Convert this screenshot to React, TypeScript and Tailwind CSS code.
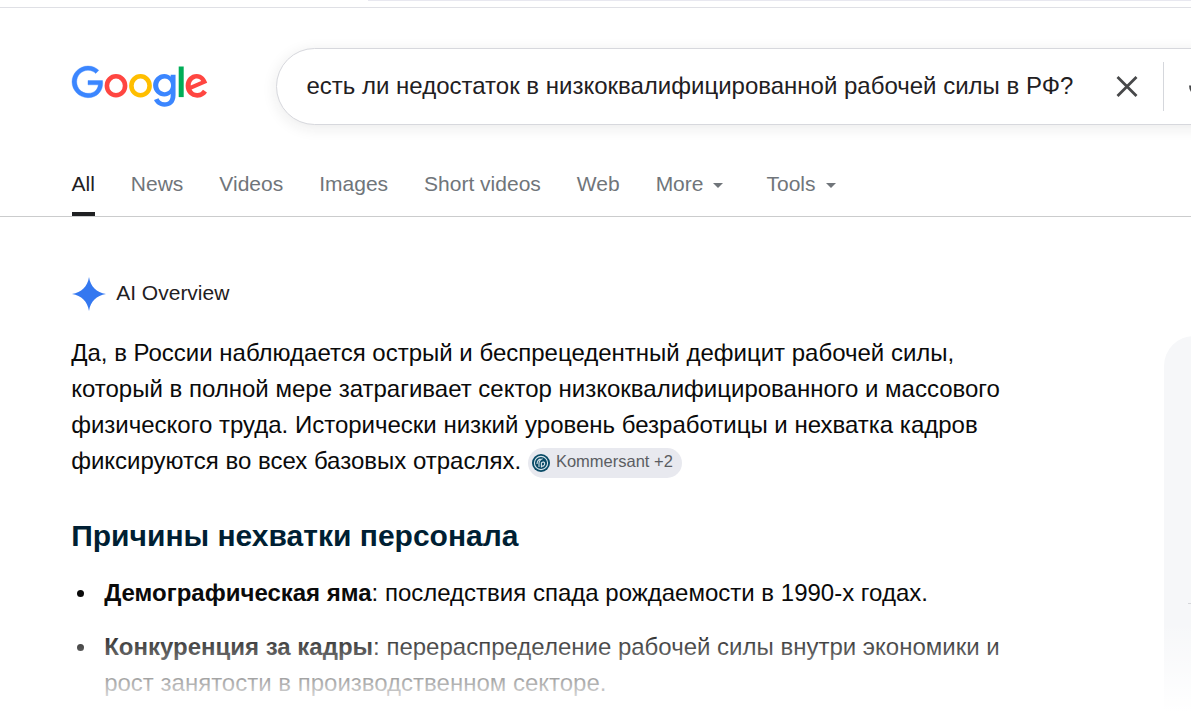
import React from "react";

function GoogleLogo() {
  return (
    <svg className="block h-[46px] w-[138px]" viewBox="0 0 138 46" aria-label="Google">
      <path fill="#3b86ff" stroke="#3b86ff" strokeWidth="0.8" transform="translate(0.84 0.78) scale(0.4575 0.46)" d="M35.29 41.41V32H67c.31 1.64.47 3.58.47 5.68 0 7.06-1.93 15.79-8.15 22.01-6.05 6.3-13.78 9.66-24.02 9.66C16.32 69.35.36 53.89.36 34.91.36 15.93 16.32.47 35.3.47c10.5 0 17.98 4.12 23.6 9.49l-6.64 6.64c-4.03-3.78-9.49-6.72-16.97-6.72-13.86 0-24.7 11.17-24.7 25.03 0 13.86 10.84 25.03 24.7 25.03 8.99 0 14.11-3.61 17.39-6.89 2.66-2.66 4.41-6.46 5.1-11.65l-22.49.01z" />
      <ellipse cx="45" cy="20.8" rx="9.1" ry="9.5" fill="none" stroke="#ff4641" strokeWidth="4.6" />
      <ellipse cx="69.5" cy="20.8" rx="9.1" ry="9.5" fill="none" stroke="#ffbe00" strokeWidth="4.6" />
      <path fill="#3b86ff" transform="translate(-6.2 -3.7) scale(0.528 0.509)" d="M209.75 26.34v39.82c0 16.38-9.66 23.07-21.08 23.07-10.75 0-17.22-7.19-19.66-13.07l8.48-3.53c1.51 3.61 5.21 7.87 11.17 7.87 7.31 0 11.84-4.51 11.84-13v-3.19h-.34c-2.18 2.69-6.38 5.04-11.68 5.04-11.09 0-21.25-9.66-21.25-22.09 0-12.52 10.16-22.26 21.25-22.26 5.29 0 9.49 2.35 11.68 4.96h.34v-3.61h9.25zm-8.56 20.92c0-7.81-5.21-13.52-11.84-13.52-6.72 0-12.35 5.71-12.35 13.52 0 7.73 5.63 13.36 12.35 13.36 6.63 0 11.84-5.63 11.84-13.36z" />
      <path fill="#00ad57" d="M107.7 1.5h5v30.6h-5z" />
      <path fill="#ff4641" transform="translate(-6.1 -4.4) scale(0.527 0.534)" d="M262.02 54.48l7.56 5.04c-2.44 3.61-8.32 9.83-18.48 9.83-12.6 0-22.01-9.74-22.01-22.18 0-13.19 9.49-22.18 20.92-22.18 11.51 0 17.14 9.16 18.98 14.11l1.01 2.52-29.65 12.28c2.27 4.45 5.8 6.72 10.75 6.72 4.96 0 8.4-2.44 10.92-6.14zm-23.27-7.98l19.82-8.23c-1.09-2.77-4.37-4.7-8.23-4.7-4.95 0-11.84 4.37-11.59 12.93z" />
    </svg>
  );
}

function Caret() {
  return (
    <svg className="mt-[3px] h-[5px] w-[10px]" viewBox="0 0 10 5" fill="currentColor">
      <path d="M0 0h10L5 5z" />
    </svg>
  );
}

function Sparkle() {
  return (
    <svg className="h-[36px] w-[36px] shrink-0" viewBox="0 0 36 36" fill="#3478f0">
      <path d="M18 1C19.5 10.5 25.5 16.5 35 18C25.5 19.5 19.5 25.5 18 35C16.5 25.5 10.5 19.5 1 18C10.5 16.5 16.5 10.5 18 1Z" />
    </svg>
  );
}

function SourceIcon() {
  return (
    <svg className="h-[18px] w-[18px]" viewBox="0 0 18 18" fill="none">
      <circle cx="9" cy="9" r="9" fill="#084a66" />
      <circle cx="9" cy="9" r="6.6" stroke="#d9e4ea" strokeWidth="1.1" />
      <path d="M5 10c.2-3 1.6-4.6 3.6-5M7 13V9.5c.2-2.6 1.4-4.2 3.6-4.7M9.4 13.6V8.6M9.4 9c1.8-1.8 3.3-.8 3.3.8S11 12.6 9.4 12" stroke="#d9e4ea" strokeWidth="1.1" />
    </svg>
  );
}

const tabs = ["News", "Videos", "Images", "Short videos", "Web"];

export default function App() {
  return (
    <div className="relative flex h-[726px] w-[1191px] flex-col overflow-hidden bg-white font-['Liberation_Sans',Arial,sans-serif] text-[#0a0a0a]">
      <div className="h-[8px] shrink-0 border-b border-[#dfe0e5]">
        <div className="ml-[368px] h-px bg-[#e8e8f0]" />
      </div>

      <header className="flex h-[146px] shrink-0 items-start pt-[40px]">
        <div className="ml-[71px] mt-[17px] w-[205px] shrink-0">
          <GoogleLogo />
        </div>
        <div className="flex h-[77px] w-[1100px] shrink-0 items-center rounded-full border border-[#d7d8dd] bg-white pl-[29.5px] shadow-[0_3px_15px_rgba(32,33,36,0.09)]">
          <span className="-mt-[2px] w-[809.5px] shrink-0 whitespace-nowrap text-[24px] leading-[36px] text-[#1f2022]">
            есть ли недостаток в низкоквалифицированной рабочей силы в РФ?
          </span>
          <svg className="h-[22px] w-[22px] shrink-0" viewBox="0 0 22 22" stroke="#47484a" strokeWidth="2.8" fill="none">
            <path d="M1.5 1l19 19M20.5 1l-19 19" />
          </svg>
          <div className="ml-[25px] h-[49px] w-px shrink-0 bg-[#d5d7dc]" />
          <svg className="ml-[25px] h-[24px] w-[24px] shrink-0" viewBox="0 0 24 24" fill="none" stroke="#47484a" strokeWidth="2.5">
            <path d="M1.3 10.5C1.3 24 22.7 24 22.7 10.5" />
          </svg>
        </div>
      </header>

      <nav className="flex h-[63px] shrink-0 items-stretch border-b border-[#cbcccd] pl-[71.5px] text-[21px] leading-[60px] text-[#70757a]">
        <span className="border-b-4 border-[#1f2022] text-[#1f2022]">All</span>
        {tabs.map((t) => (
          <span key={t} className="ml-9 whitespace-nowrap">{t}</span>
        ))}
        <span className="ml-9 flex h-[60px] items-center gap-[9.5px]">More <Caret /></span>
        <span className="ml-[43.5px] flex h-[60px] items-center gap-[10.5px]">Tools <Caret /></span>
      </nav>

      <div className="flex grow items-start">
        <main className="w-[1164px] shrink-0 pl-[71.2px] pt-[59px]">
          <div className="flex h-[36px] items-center gap-[9px] text-[21px] text-[#1f2022]">
            <Sparkle />
            <span className="-mt-[3px]">AI Overview</span>
          </div>
          <div className="mt-[23px] whitespace-nowrap text-[24px] leading-[36px]">
            <p>Да, в России наблюдается острый и беспрецедентный дефицит рабочей силы,</p>
            <p>который в полной мере затрагивает сектор низкоквалифицированного и массового</p>
            <p>физического труда. Исторически низкий уровень безработицы и нехватка кадров</p>
            <div className="flex h-[36px] items-center">
              <span>фиксируются во всех базовых отраслях.</span>
              <span className="ml-[6.8px] mt-[3px] flex h-[30px] w-[154px] items-center gap-[6px] rounded-full bg-[#e8e9ef] pl-[4px] text-[16.5px] leading-[30px] text-[#5b5d62]">
                <SourceIcon />
                <span className="-mt-[4px]">Kommersant +2</span>
              </span>
            </div>
          </div>
          <h2 className="mt-[39px] text-[30px] font-bold leading-[36px] text-[#001f33]">Причины нехватки персонала</h2>
          <ul className="mt-[21px] flex flex-col gap-[18px] whitespace-nowrap text-[24px] leading-[36px]">
            <li className="flex">
              <span className="ml-[5.8px] mt-[15px] mr-[20.2px] h-[7px] w-[7px] rounded-full bg-[#0a0a0a]" />
              <span><b>Демографическая яма</b>: последствия спада рождаемости в 1990-х годах.</span>
            </li>
            <li className="flex">
              <span className="ml-[5.8px] mt-[15px] mr-[20.2px] h-[7px] w-[7px] rounded-full bg-[#0a0a0a]" />
              <span><b>Конкуренция за кадры</b>: перераспределение рабочей силы внутри экономики и<br />рост занятости в производственном секторе.</span>
            </li>
          </ul>
        </main>
        <aside className="mt-[119px] h-[390px] w-[300px] shrink-0 rounded-tl-[30px] bg-[#f6f7f9] pl-[24px] pt-[267px]">
          <div className="h-px bg-[#d5d6da]" />
        </aside>
      </div>
      <div className="absolute bottom-0 left-0 h-[104px] w-full bg-[linear-gradient(to_bottom,rgba(255,255,255,0)_0px,white_90px)]" />
    </div>
  );
}
